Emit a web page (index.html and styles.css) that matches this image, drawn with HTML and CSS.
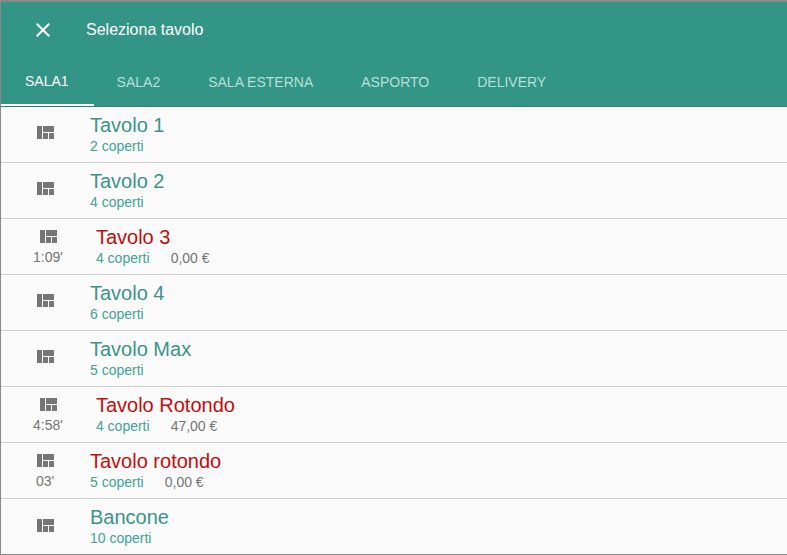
FILE: index.html
```html
<!DOCTYPE html>
<html lang="it">
<head>
<meta charset="utf-8">
<title>Seleziona tavolo</title>
<link rel="stylesheet" href="styles.css">
</head>
<body>
<div class="dialog">
  <header class="toolbar">
    <div class="title-row">
      <svg class="close" viewBox="0 0 24 24"><path d="M19 6.41 17.59 5 12 10.59 6.41 5 5 6.41 10.59 12 5 17.59 6.41 19 12 13.41 17.59 19 19 17.59 13.41 12z"/></svg>
      <span class="title">Seleziona tavolo</span>
    </div>
    <nav class="tabs">
      <span class="tab active">SALA1</span>
      <span class="tab">SALA2</span>
      <span class="tab">SALA ESTERNA</span>
      <span class="tab">ASPORTO</span>
      <span class="tab">DELIVERY</span>
    </nav>
  </header>
  <main class="list">
    <div class="row"><div class="lead"><svg class="quilt" viewBox="0 0 24 24"><path d="M10 18h5v-6h-5v6zm-6 0h5V5H4v13zm12 0h5v-6h-5v6zM10 5v6h11V5H10z"/></svg></div><div class="info"><div class="name">Tavolo 1</div><div class="sub"><span class="seats">2 coperti</span></div></div></div>
    <div class="row"><div class="lead"><svg class="quilt" viewBox="0 0 24 24"><path d="M10 18h5v-6h-5v6zm-6 0h5V5H4v13zm12 0h5v-6h-5v6zM10 5v6h11V5H10z"/></svg></div><div class="info"><div class="name">Tavolo 2</div><div class="sub"><span class="seats">4 coperti</span></div></div></div>
    <div class="row"><div class="lead"><svg class="quilt" viewBox="0 0 24 24"><path d="M10 18h5v-6h-5v6zm-6 0h5V5H4v13zm12 0h5v-6h-5v6zM10 5v6h11V5H10z"/></svg><span class="time">1:09'</span></div><div class="info"><div class="name busy">Tavolo 3</div><div class="sub"><span class="seats">4 coperti</span><span class="amount">0,00 €</span></div></div></div>
    <div class="row"><div class="lead"><svg class="quilt" viewBox="0 0 24 24"><path d="M10 18h5v-6h-5v6zm-6 0h5V5H4v13zm12 0h5v-6h-5v6zM10 5v6h11V5H10z"/></svg></div><div class="info"><div class="name">Tavolo 4</div><div class="sub"><span class="seats">6 coperti</span></div></div></div>
    <div class="row"><div class="lead"><svg class="quilt" viewBox="0 0 24 24"><path d="M10 18h5v-6h-5v6zm-6 0h5V5H4v13zm12 0h5v-6h-5v6zM10 5v6h11V5H10z"/></svg></div><div class="info"><div class="name">Tavolo Max</div><div class="sub"><span class="seats">5 coperti</span></div></div></div>
    <div class="row"><div class="lead"><svg class="quilt" viewBox="0 0 24 24"><path d="M10 18h5v-6h-5v6zm-6 0h5V5H4v13zm12 0h5v-6h-5v6zM10 5v6h11V5H10z"/></svg><span class="time">4:58'</span></div><div class="info"><div class="name busy">Tavolo Rotondo</div><div class="sub"><span class="seats">4 coperti</span><span class="amount">47,00 €</span></div></div></div>
    <div class="row"><div class="lead"><svg class="quilt" viewBox="0 0 24 24"><path d="M10 18h5v-6h-5v6zm-6 0h5V5H4v13zm12 0h5v-6h-5v6zM10 5v6h11V5H10z"/></svg><span class="time">03'</span></div><div class="info"><div class="name busy">Tavolo rotondo</div><div class="sub"><span class="seats">5 coperti</span><span class="amount">0,00 €</span></div></div></div>
    <div class="row"><div class="lead"><svg class="quilt" viewBox="0 0 24 24"><path d="M10 18h5v-6h-5v6zm-6 0h5V5H4v13zm12 0h5v-6h-5v6zM10 5v6h11V5H10z"/></svg></div><div class="info"><div class="name">Bancone</div><div class="sub"><span class="seats">10 coperti</span></div></div></div>
  </main>
</div>
</body>
</html>
```
FILE: styles.css
```css
* { box-sizing: border-box; }
html, body { margin: 0; height: 100%; overflow: hidden; }
body { background: #8a8a8a; font-family: "Liberation Sans", Arial, sans-serif; padding: 2px 0 0 1px; }
.dialog { background: #fafafa; height: 553px; display: flex; flex-direction: column; border-bottom: 1px solid #8a8a8a; }
.toolbar { background: #329585; color: #fff; height: 105px; flex: none; display: flex; flex-direction: column; border-bottom: 1px solid #2b7f72; }
.title-row { height: 55px; display: flex; align-items: center; padding-left: 30px; flex: none; }
.close { width: 24px; height: 24px; fill: #fff; flex: none; }
.title { font-size: 16px; margin-left: 31px; }
.tabs { display: flex; height: 49px; }
.tab { height: 49px; padding: 0 24px; display: flex; align-items: center; font-size: 14px; color: #b4e0d8; }
.tab.active { color: #fff; padding-right: 25px; margin-right: -1px; border-bottom: 2px solid #fff; }
.list { flex: 1; }
.row { height: 56px; display: flex; align-items: center; border-bottom: 1px solid #cfcfcf; padding-bottom: 3px; }
.row:last-child { border-bottom: none; padding-bottom: 2px; }
.row:last-child .info { margin-top: -2px; }
.lead { display: flex; flex-direction: column; align-items: center; margin: 0 33px 0 32px; min-width: 24px; }
.quilt { width: 24px; height: 24px; fill: #757575; display: block; }
.time { font-size: 14px; line-height: 16px; color: #757575; }
.info { display: flex; flex-direction: column; padding-top: 2px; }
.name { font-size: 20px; line-height: 24px; color: #3b9488; }
.name.busy { color: #c40c0c; }
.sub { font-size: 14px; line-height: 18px; display: flex; gap: 21px; }
.seats { color: #43a295; }
.amount { color: #757575; }
```
